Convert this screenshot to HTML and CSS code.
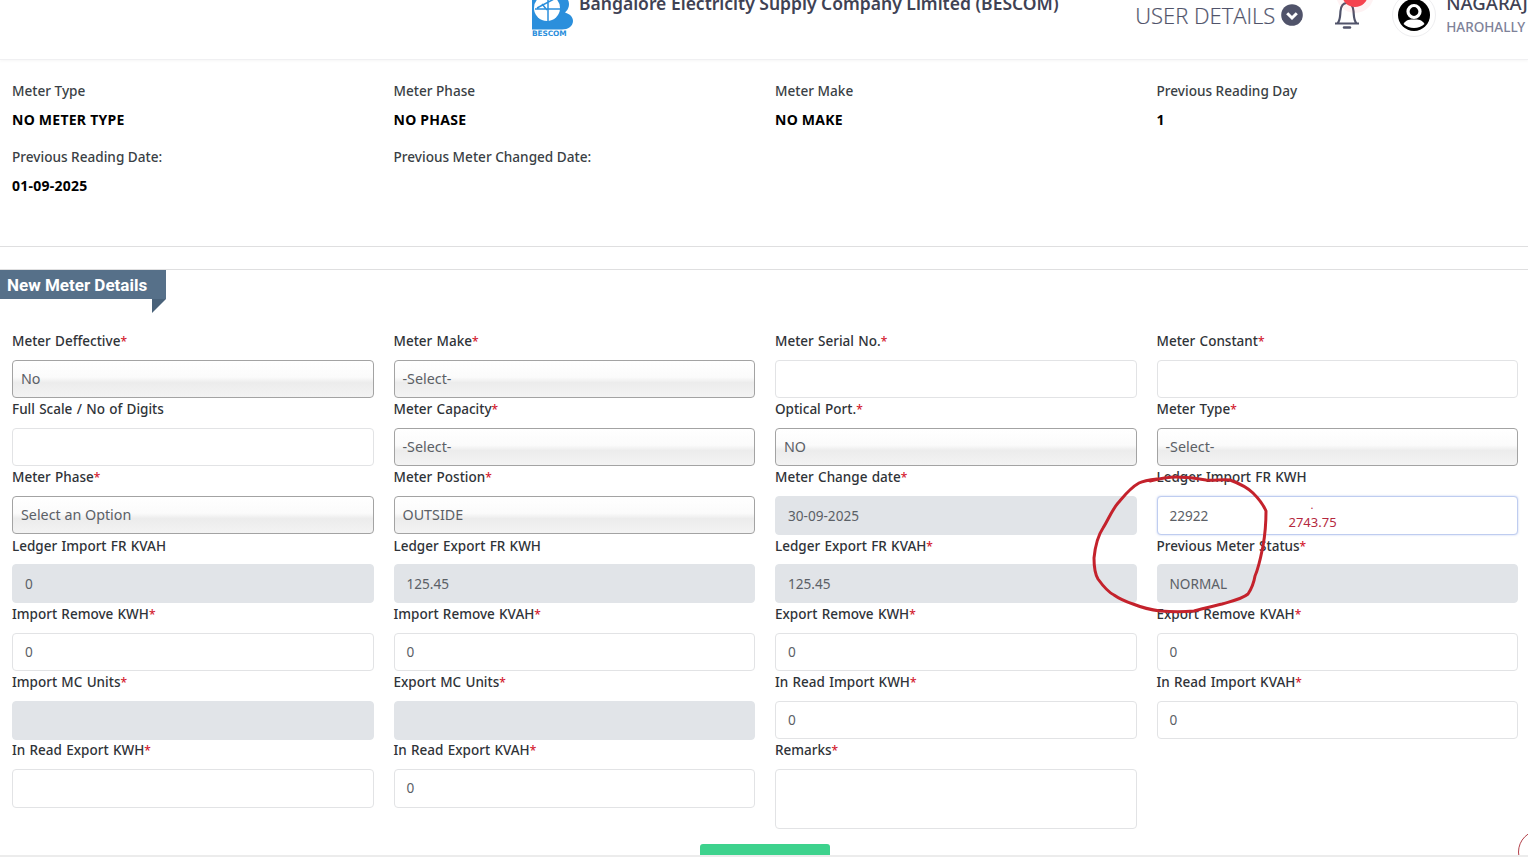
FILE: index.html
```html
<!DOCTYPE html>
<html lang="en">
<head>
<meta charset="utf-8">
<title>New Meter Details</title>
<link rel="stylesheet" href="styles.css">
</head>
<body>
<div class="page">
  <header class="topbar">
    <div class="brand">
      <div class="logo">
        <svg class="logo-mark" width="42" height="30" viewBox="0 0 42 30">
          <path d="M0 0H36C38 4 37 9 33 12.500C38 14 41 17 41 21C41 26 36 29.500 30 29.500H0Z" fill="#2b8fdc"/>
          <circle cx="15" cy="8" r="13" fill="#fff"/>
          <path d="M16 -5V21M3 9H28M5 8L24 -2M10 4L15 10" stroke="#2b8fdc" stroke-width="1.500" fill="none"/>
        </svg>
        <span class="logo-text">BESCOM</span>
      </div>
      <h1 class="title">Bangalore Electricity Supply Company Limited (BESCOM)</h1>
    </div>
    <div class="user-details">
      <span>USER DETAILS</span>
      <svg width="22" height="22" viewBox="0 0 22 22"><circle cx="11" cy="11" r="10.8" fill="#50536a"/><path d="M6.200 9.200L11 14L15.800 9.200" fill="none" stroke="#fff" stroke-width="3"/></svg>
    </div>
    <div class="bell">
      <svg width="26" height="30" viewBox="0 0 26 30"><path d="M1 23.500H25M3.500 23.500C6.500 20 6 16 6.500 11C7 6 9.500 3 13 3C16.500 3 19 6 19.500 11C20 16 19.500 20 22.500 23.500" fill="none" stroke="#50536a" stroke-width="2.200"/><path d="M10 27.500H16" stroke="#50536a" stroke-width="2.400" stroke-linecap="round"/></svg>
      <span class="badge"></span>
    </div>
    <div class="avatar">
      <svg width="32" height="32" viewBox="0 0 32 32"><circle cx="16" cy="16" r="16" fill="#000"/><circle cx="16" cy="12.500" r="6" fill="none" stroke="#fff" stroke-width="3.200"/><path d="M5.500 25C8 20.500 12 20.500 16 20.500C20 20.500 24 20.500 26.500 25C23.500 27.600 20 29 16 29C12 29 8.500 27.600 5.500 25Z" fill="#fff"/></svg>
    </div>
    <div class="user-name">
      <div class="name">NAGARAJ</div>
      <div class="place">HAROHALLY</div>
    </div>
  </header>

  <section class="info">
    <div class="info-item"><div class="info-label">Meter Type</div><div class="info-value">NO METER TYPE</div></div>
    <div class="info-item"><div class="info-label">Meter Phase</div><div class="info-value">NO PHASE</div></div>
    <div class="info-item"><div class="info-label">Meter Make</div><div class="info-value">NO MAKE</div></div>
    <div class="info-item"><div class="info-label">Previous Reading Day</div><div class="info-value">1</div></div>
    <div class="info-item"><div class="info-label">Previous Reading Date:</div><div class="info-value">01-09-2025</div></div>
    <div class="info-item"><div class="info-label">Previous Meter Changed Date:</div></div>
  </section>

  <hr class="rule rule-a">
  <hr class="rule rule-b">

  <div class="ribbon">New Meter Details</div>

  <form class="form">
    <div class="field"><label>Meter Deffective<b>*</b></label><div class="ctl sel">No</div></div>
    <div class="field"><label>Meter Make<b>*</b></label><div class="ctl sel">-Select-</div></div>
    <div class="field"><label>Meter Serial No.<b>*</b></label><div class="ctl"></div></div>
    <div class="field"><label>Meter Constant<b>*</b></label><div class="ctl"></div></div>

    <div class="field"><label>Full Scale / No of Digits</label><div class="ctl"></div></div>
    <div class="field"><label>Meter Capacity<b>*</b></label><div class="ctl sel">-Select-</div></div>
    <div class="field"><label>Optical Port.<b>*</b></label><div class="ctl sel">NO</div></div>
    <div class="field"><label>Meter Type<b>*</b></label><div class="ctl sel">-Select-</div></div>

    <div class="field"><label>Meter Phase<b>*</b></label><div class="ctl sel">Select an Option</div></div>
    <div class="field"><label>Meter Postion<b>*</b></label><div class="ctl sel">OUTSIDE</div></div>
    <div class="field"><label>Meter Change date<b>*</b></label><div class="ctl dis">30-09-2025</div></div>
    <div class="field"><label>Ledger Import FR KWH</label><div class="ctl focus">22922<span class="hint-dot">.</span><span class="hint">2743.75</span></div></div>

    <div class="field"><label>Ledger Import FR KVAH</label><div class="ctl dis">0</div></div>
    <div class="field"><label>Ledger Export FR KWH</label><div class="ctl dis">125.45</div></div>
    <div class="field"><label>Ledger Export FR KVAH<b>*</b></label><div class="ctl dis">125.45</div></div>
    <div class="field"><label>Previous Meter Status<b>*</b></label><div class="ctl dis">NORMAL</div></div>

    <div class="field"><label>Import Remove KWH<b>*</b></label><div class="ctl">0</div></div>
    <div class="field"><label>Import Remove KVAH<b>*</b></label><div class="ctl">0</div></div>
    <div class="field"><label>Export Remove KWH<b>*</b></label><div class="ctl">0</div></div>
    <div class="field"><label>Export Remove KVAH<b>*</b></label><div class="ctl">0</div></div>

    <div class="field"><label>Import MC Units<b>*</b></label><div class="ctl dis"></div></div>
    <div class="field"><label>Export MC Units<b>*</b></label><div class="ctl dis"></div></div>
    <div class="field"><label>In Read Import KWH<b>*</b></label><div class="ctl">0</div></div>
    <div class="field"><label>In Read Import KVAH<b>*</b></label><div class="ctl">0</div></div>

    <div class="field"><label>In Read Export KWH<b>*</b></label><div class="ctl tall"></div></div>
    <div class="field"><label>In Read Export KVAH<b>*</b></label><div class="ctl tall">0</div></div>
    <div class="field"><label>Remarks<b>*</b></label><div class="ctl area"></div></div>
  </form>

  <div class="actions"><div class="submit"></div></div>

  <svg class="scribble" width="1528" height="857" viewBox="0 0 1528 857">
    <path d="M1157 479C1148 480 1143 481 1139 483C1130 488 1124 496 1118 503C1112 510 1108 520 1103 528C1097 537 1095 548 1094 558C1094 567 1095 574 1098 579C1103 586 1108 592 1114 595C1121 600 1127 602 1133 604C1143 608 1152 610 1160 611C1172 612 1184 612 1194 611C1204 608 1214 606 1222 604C1232 601 1242 599 1248 594C1252 588 1254 582 1255 576C1259 567 1261 556 1263 546C1265 535 1266 522 1266 511C1263 504 1258 498 1253 493C1247 487 1238 483 1230 480C1222 479 1214 481 1206 480C1196 478 1186 477 1176 477C1168 477 1162 478 1150 481" fill="none" stroke="#c4222c" stroke-width="3" stroke-linecap="round" stroke-linejoin="round"/>
  </svg>
  <div class="fab"></div>
  <div class="bottom-line"></div>
</div>
</body>
</html>
```
FILE: styles.css
```css
* { box-sizing: border-box; }
html, body { margin: 0; padding: 0; height: 857px; overflow: hidden; background: #fff; }
body { font-family: "Noto Sans", "Open Sans", "Liberation Sans", sans-serif; color: #212529; }
.page { position: relative; width: 1528px; height: 857px; overflow: hidden; }

.topbar {
  height: 60px;
  display: flex;
  align-items: flex-start;
  border-bottom: 1px solid #f0f0f2;
  box-shadow: 0 1px 3px rgba(0,0,0,.04);
  overflow: hidden;
  padding-left: 532px;
}
.brand { display: flex; align-items: flex-start; width: 604px; margin-top: -8px; }
.logo { width: 47px; height: 44px; position: relative; margin-top: 8px; flex: none; }
.logo-mark { display: block; }
.logo-text { display: block; font-size: 7.400px; line-height: 7px; font-weight: 800; color: #2b8fdc; font-family: "DejaVu Sans", sans-serif; letter-spacing: -.1px; }
.title { margin: 0; font-size: 17.500px; line-height: 22px; font-weight: 600; color: #3f4254; white-space: nowrap; }
.user-details { display: flex; align-items: center; gap: 6px; width: 199px; height: 30px; font-size: 22px; font-weight: 300; color: #50536a; flex: none; font-family: "Open Sans", sans-serif; -webkit-text-stroke: .2px #50536a; }
.bell { position: relative; width: 26px; height: 30px; margin-right: 32px; flex: none; }
.bell svg { display: block; }
.badge { position: absolute; left: 8px; top: -19px; width: 26px; height: 26px; border-radius: 50%; background: #f5434f; box-shadow: 0 0 0 6px rgba(245,67,79,.07); }
.avatar { width: 44px; height: 44px; margin-top: -7px; border-radius: 50%; border: 1px solid #eeeef0; display: flex; align-items: center; justify-content: center; margin-right: 10px; flex: none; }
.user-name { flex: none; margin-top: -8px; white-space: nowrap; }
.name { font-size: 18.500px; line-height: 22px; font-weight: 500; color: #3f4254; }
.place { font-size: 13.500px; line-height: 20px; font-weight: 500; color: #7e8299; margin-top: 3px; }

.info, .form {
  display: grid;
  grid-template-columns: repeat(4, 361.5px);
  column-gap: 20px;
  padding-left: 12px;
}
.info { height: 186px; padding-top: 22px; grid-auto-rows: 66px; align-content: start; }
.info-label { font-size: 13.600px; line-height: 18px; color: #3a3f45; font-weight: 500; }
.info-value { font-size: 14px; line-height: 18px; font-weight: 700; color: #000; margin-top: 11px; letter-spacing: .25px; }

.rule { border: 0; height: 1px; margin: 0; background: #dfdfe0; }
.rule-b { margin-top: 22px; }

.ribbon {
  position: relative;
  width: 166px;
  height: 29px;
  background: #567089;
  color: #fff;
  font-family: Roboto, sans-serif;
  font-size: 17px;
  line-height: 30px;
  font-weight: 700;
  padding-left: 7px;
  white-space: nowrap;
}
.ribbon::after {
  content: "";
  position: absolute;
  right: 0;
  bottom: -14px;
  border-right: 14px solid transparent;
  border-top: 14px solid #49627a;
}

.form { margin-top: 33px; grid-auto-rows: 68.2px; }
.field label { display: block; height: 18px; font-size: 13.500px; line-height: 18px; word-spacing: .8px; font-weight: 500; color: #2f3338; white-space: nowrap; }
.field label b { color: #d3202f; font-size: 12px; line-height: 0; font-weight: 500; }
.ctl {
  position: relative;
  height: 38px;
  margin-top: 9.800px;
  padding: 0 12px;
  border: 1px solid #e2e3e5;
  border-radius: 4px;
  font-size: 13.600px;
  line-height: 36px;
  color: #5b6066;
  background: #fff;
}
.sel {
  border-color: #a3a3a3;
  padding: 0 8px;
  font-size: 14.300px;
  background: linear-gradient(#ffffff 0%, #fbfbfb 45%, #ececec 60%, #f3f3f3 100%);
}
.dis { height: 39px; background: #e1e4e8; border-color: #e1e4e8; line-height: 38px; }
.focus { height: 39px; border-color: #bfcdf0; box-shadow: 0 0 2px rgba(120,150,230,.5); line-height: 38px; }
.tall { height: 39px; line-height: 36px; }
.area { height: 60px; }
.hint { position: absolute; left: 131px; top: 15px; color: #b5283e; font-size: 13px; line-height: 20px; }
.hint-dot { position: absolute; left: 153px; top: -2px; color: #b5283e; font-size: 11px; line-height: 20px; }

.actions { position: absolute; left: 0; right: 0; bottom: 1px; display: flex; justify-content: center; padding-left: 2px; }
.submit { width: 130px; height: 12px; background: #3dd28d; border-radius: 3px 3px 0 0; }
.scribble { position: absolute; left: 0; top: 0; pointer-events: none; }
.fab { position: absolute; left: 1518px; top: 830px; width: 44px; height: 44px; border-radius: 50%; border: 1.500px solid #b3404a; }
.bottom-line { position: absolute; left: 0; right: 0; bottom: 0; height: 2px; background: #ececec; }
```
